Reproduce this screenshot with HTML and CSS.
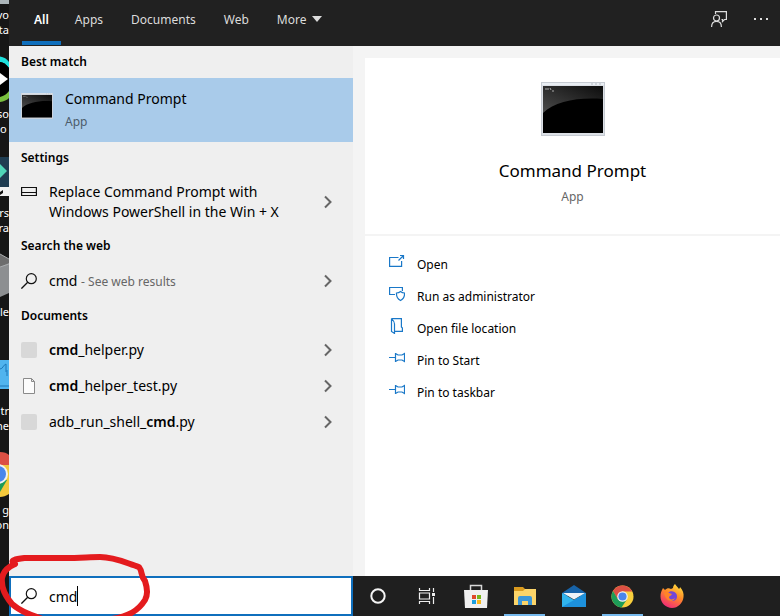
FILE: index.html
```
<!DOCTYPE html>
<html lang="en">
<head>
    <meta charset="UTF-8">
    <meta name="viewport" content="width=device-width, initial-scale=1.0">
    <title>Search</title>
    <link rel="stylesheet" href="styles.css">
</head>
<body>

    <!-- Shared symbols -->
    <svg class="symbols" aria-hidden="true">
        <symbol id="chevron" viewBox="0 0 10 14">
            <path d="M2 1.5L7.5 7L2 12.5" fill="none" stroke="#666" stroke-width="2"/>
        </symbol>
        <symbol id="search" viewBox="0 0 16 16">
            <circle cx="10.3" cy="5.7" r="5" fill="none" stroke="#111" stroke-width="1.2"/>
            <path d="M6.7 9.3L.4 15.6" stroke="#111" stroke-width="1.3"/>
        </symbol>
        <symbol id="pin" viewBox="0 0 16 16">
            <path d="M0 7.5H6M6.5 3V12M6.5 3.500L9 5H13L15.500 3.500V11.500L13 10H9L6.500 11.500" fill="none" stroke="#1a78c8" stroke-width="1.2"/>
        </symbol>
        <symbol id="console" viewBox="0 0 64 54" preserveAspectRatio="none">
            <rect x=".5" y=".5" width="63" height="53" fill="#dce0e6" stroke="#c6cbd2"/>
            <path d="M1 1H63V3H1Z" fill="#e9eef3"/>
            <rect x="2" y="4" width="60" height="47" fill="#000"/>
            <path d="M2 4H62V17C38 15 14 19 2 31Z" fill="url(#gloss)"/>
            <path d="M4 7H6M7 6V8M9 6L10 8M11 9H13" stroke="#aaa" stroke-width="1"/>
            <path d="M50 2H52M54 2H56M58 2H60" stroke="#b4b9c0" stroke-width="1"/>
        </symbol>
        <symbol id="chrome" viewBox="0 0 48 48">
            <circle cx="24" cy="24" r="23" fill="#f9cf3d"/>
            <path d="M4 12.5A23 23 0 0 1 44 12.5L44 13.5H24L14 29.5Z" fill="#dc5044"/>
            <path d="M4.1 12.5A23 23 0 0 0 22 46.9L33.5 29.5L24 34L14.5 29.5Z" fill="#1d9c58"/>
            <circle cx="24" cy="24" r="11" fill="#f2f2f2"/>
            <circle cx="24" cy="24" r="8.5" fill="#4a86ec"/>
        </symbol>
        <linearGradient id="gloss" x1="0" y1="1" x2="1" y2="0">
            <stop offset="0" stop-color="#4c4c4c"/>
            <stop offset="1" stop-color="#0c0c0c"/>
        </linearGradient>
    </svg>

    <div class="screen">
        <aside class="desktop">
            <div class="shortcut">
                <div class="shortcut-icon bin"></div>
                <span>vo</span>
                <span>ta</span>
            </div>
            <div class="shortcut">
                <svg class="shortcut-icon" viewBox="0 0 9 48">
                    <path d="M0 1.5C4 2 7 4 9 7V13C6 9 3 7 0 7Z" fill="#1fe0dc"/>
                    <path d="M0 7C3 7 6 9 9 13V37C6 41 3 43 0 43Z" fill="#000"/>
                    <path d="M0 18L8 24L0 30Z" fill="#fff"/>
                    <path d="M9 36V43C7 45 4 46.5 0 47V42C4 41 7 39 9 36Z" fill="#79bf3f"/>
                </svg>
                <span>so</span>
                <span class="start">o C</span>
            </div>
            <div class="shortcut">
                <svg class="shortcut-icon" viewBox="0 0 9 48">
                    <rect y="3" width="9" height="30" fill="#1f3d52"/>
                    <path d="M0 10L7 17L0 24Z" fill="#4fd6b8"/>
                    <rect y="33" width="9" height="9" fill="#f2f2f2"/>
                    <path d="M0 38L3 36V39L0 41Z" fill="#111"/>
                </svg>
                <span>ers</span>
                <span>ora</span>
            </div>
            <div class="shortcut">
                <svg class="shortcut-icon" viewBox="0 0 9 48">
                    <path d="M0 1L9 6V12L0 14Z" fill="#6d6d6d"/>
                    <path d="M0 14L9 10V40L0 44Z" fill="#8d8f91"/>
                    <path d="M0 1L9 6M0 14L9 11" stroke="#a9abad" fill="none"/>
                </svg>
                <span>le</span>
                <span>&nbsp;</span>
            </div>
            <div class="shortcut">
                <svg class="shortcut-icon" viewBox="0 0 9 48">
                    <rect y="8" width="9" height="29" fill="#50b4ee"/>
                    <path d="M0 34H9M0 17C3 17 3 13 6 12V20M7 18V24" stroke="#1c77b8" fill="none"/>
                </svg>
                <span>tr</span>
                <span>ne</span>
            </div>
            <div class="shortcut">
                <svg class="shortcut-icon" viewBox="0 0 9 48">
                    <path d="M0 1C4 1 7 2 9 4V14H0Z" fill="#dc5044"/>
                    <path d="M0 14H9V43C6 45 3 46 0 46Z" fill="#f4c93c"/>
                    <path d="M0 41L7 29H0Z" fill="#1d9c58"/>
                    <circle cx="-2" cy="23" r="10" fill="#f2f2f2"/>
                    <circle cx="-2" cy="23" r="8" fill="#4a86ec"/>
                </svg>
                <span>g</span>
                <span>on</span>
            </div>
        </aside>

        <div class="shell">
            <header class="tabs">
                <nav>
                    <button class="tab active">All</button>
                    <button class="tab">Apps</button>
                    <button class="tab">Documents</button>
                    <button class="tab">Web</button>
                    <button class="tab">More <svg width="10" height="6" viewBox="0 0 10 6"><path d="M0 0H10L5 6Z" fill="#dcdcdc"/></svg></button>
                </nav>
                <div class="tools">
                    <button aria-label="Feedback">
                        <svg width="16" height="16" viewBox="0 0 16 16" fill="none" stroke="#ddd" stroke-width="1.2">
                            <path d="M4.5 3V.6H15.4V8.5H13.5L11.5 10.5V8.5H10.5"/>
                            <circle cx="5.5" cy="7" r="3"/>
                            <path d="M.6 16C.6 12.5 2.5 10.3 5.5 10.3S10.4 12.5 10.4 16"/>
                        </svg>
                    </button>
                    <button aria-label="Options">
                        <svg width="16" height="16" viewBox="0 0 16 16" fill="#ddd"><path d="M1 7H3V9H1ZM7 7H9V9H7ZM13 7H15V9H13Z"/></svg>
                    </button>
                </div>
            </header>

            <main class="panes">
                <section class="results">
                    <h2>Best match</h2>
                    <button class="best">
                        <svg width="32" height="26"><use href="#console"/></svg>
                        <span>
                            <span class="name">Command Prompt</span>
                            <span class="kind">App</span>
                        </span>
                    </button>

                    <h2>Settings</h2>
                    <button class="result tall">
                        <svg class="icon" viewBox="0 0 16 16"><path d="M.6 3.5H15.4V11.5H.6ZM.6 8.5H15.4" fill="none" stroke="#111" stroke-width="1.2"/></svg>
                        <span class="label">Replace Command Prompt with Windows PowerShell in the Win + X</span>
                        <svg class="chevron"><use href="#chevron"/></svg>
                    </button>

                    <h2>Search the web</h2>
                    <button class="result web">
                        <svg class="icon"><use href="#search"/></svg>
                        <span class="label">cmd <small>- See web results</small></span>
                        <svg class="chevron"><use href="#chevron"/></svg>
                    </button>

                    <h2>Documents</h2>
                    <button class="result">
                        <span class="icon blank"></span>
                        <span class="label"><b>cmd</b>_helper.py</span>
                        <svg class="chevron"><use href="#chevron"/></svg>
                    </button>
                    <button class="result">
                        <svg class="icon" viewBox="0 0 16 16"><path d="M2.5 .5H10.5L13.5 3.5V15.5H2.5ZM10.5 .5V3.5H13.5" fill="#fcfcfc" stroke="#8a8a8a"/></svg>
                        <span class="label"><b>cmd</b>_helper_test.py</span>
                        <svg class="chevron"><use href="#chevron"/></svg>
                    </button>
                    <button class="result">
                        <span class="icon blank"></span>
                        <span class="label">adb_run_shell_<b>cmd</b>.py</span>
                        <svg class="chevron"><use href="#chevron"/></svg>
                    </button>
                </section>

                <section class="preview">
                    <div class="card">
                        <svg width="64" height="54"><use href="#console"/></svg>
                        <h1>Command Prompt</h1>
                        <p>App</p>
                    </div>
                    <div class="actions">
                        <button>
                            <svg class="icon" viewBox="0 0 16 16" fill="none" stroke="#1a78c8" stroke-width="1.2"><path d="M9.5 3.5H.6V12.4H12.6V7M9.5 6.5L14.5 1.5M11 1.5H14.5V5"/></svg>
                            Open
                        </button>
                        <button>
                            <svg class="icon" viewBox="0 0 16 16" fill="none" stroke="#1a78c8" stroke-width="1.2"><path d="M6 8.5H.6V1.5H13.4V5M11.5 5.5C13 6.8 14 7 15.5 7C15.8 11 14.5 13 11.5 14.5C8.5 13 7.2 11 7.5 7C9 7 10 6.8 11.5 5.5Z"/></svg>
                            Run as administrator
                        </button>
                        <button>
                            <svg class="icon" viewBox="0 0 16 16" fill="none" stroke="#1a78c8" stroke-width="1.2"><path d="M2.5 .6H12.4V9L13.4 10V13.4H6M2.5 .6V13.5L5.5 15.4V6C5.5 4 4 2 2.5 .6"/></svg>
                            Open file location
                        </button>
                        <button>
                            <svg class="icon"><use href="#pin"/></svg>
                            Pin to Start
                        </button>
                        <button>
                            <svg class="icon"><use href="#pin"/></svg>
                            Pin to taskbar
                        </button>
                    </div>
                </section>
            </main>

            <footer class="taskbar">
                <label class="search-box">
                    <svg class="icon"><use href="#search"/></svg>
                    <input type="text" value="cmd" aria-label="Search" autocomplete="off" spellcheck="false">
                    <span class="caret"></span>
                </label>
                <button class="task" aria-label="Cortana">
                    <svg width="16" height="16" viewBox="0 0 16 16"><circle cx="8" cy="8" r="6.7" fill="none" stroke="#f4f4f4" stroke-width="2"/></svg>
                </button>
                <button class="task" aria-label="Task View">
                    <svg width="18" height="16" viewBox="0 0 18 16" fill="none" stroke="#eee" stroke-width="1.2"><path d="M1.5 0V2.5H11.5V0M1.5 16V13.5H11.5V16M1.5 5H11.5V11H1.5ZM15.5 0V4M15.5 9V16"/><path d="M14 5H17V8H14Z" fill="#eee" stroke="none"/></svg>
                </button>
                <button class="task" aria-label="Microsoft Store">
                    <svg width="24" height="24" viewBox="0 0 24 24"><path d="M6.5 7V1.5H17.5V7" fill="none" stroke="#d8d8d8" stroke-width="1.5"/><path d="M0 6H24L23 24H1Z" fill="#f0f0f0"/><path d="M8 11H12V15H8Z" fill="#e0492a"/><path d="M13 11H17V15H13Z" fill="#79b51c"/><path d="M8 16H12V20H8Z" fill="#1c9fe0"/><path d="M13 16H17V20H13Z" fill="#f8b61c"/></svg>
                </button>
                <button class="task open" aria-label="File Explorer">
                    <svg width="22" height="20" viewBox="0 0 22 20"><path d="M0 1H9L11 3H21V8H0Z" fill="#d99a1e"/><path d="M0 5H9L11 3H22V19H0Z" fill="#fbd469"/><path d="M4 19V12Q4 10 6 10H16Q18 10 18 12V19H14V15H8V19Z" fill="#3b97d9"/></svg>
                </button>
                <button class="task" aria-label="Mail">
                    <svg width="24" height="22" viewBox="0 0 24 22"><path d="M0 8L12 0L24 8V11H0Z" fill="#1763a8"/><path d="M0 8L12 15L24 8V22H0Z" fill="#31b5ee"/><path d="M0 22L24 8V22Z" fill="#1d91dc"/><path d="M1 8H23L12 14.5Z" fill="#eef3f7"/></svg>
                </button>
                <button class="task open" aria-label="Chrome">
                    <svg width="23" height="23"><use href="#chrome"/></svg>
                </button>
                <button class="task" aria-label="Firefox">
                    <svg width="24" height="24" viewBox="0 0 24 24">
                        <defs><linearGradient id="fox" x1=".8" y1="0" x2=".3" y2="1"><stop offset="0" stop-color="#ffe23e"/><stop offset=".45" stop-color="#ff8a28"/><stop offset="1" stop-color="#f0277a"/></linearGradient></defs>
                        <path d="M3 4L5 6C7 4 9 4 11 5L13 4C13 2 14 1 15 0C16 2 18 3 19 5C20 4 20 3 20 3C23 6 24 10 23.5 13C23 19 18 24 12 24S.5 19 .5 12.5C.5 9 1.5 7 3 4Z" fill="url(#fox)"/>
                        <path d="M8 9C10 6 15 7 16.5 10C18 14 16 17 12.5 17C9 17 7 15 7 12L11 11Z" fill="#7446d8"/>
                        <path d="M4 9C6 7 8 8 9 9L12 10C11 12 9 12 9 13C9 16 13 16 15 14C13 19 6 18 4 9Z" fill="#ff8428"/>
                    </svg>
                </button>
            </footer>
        </div>

        <svg class="marker" width="152" height="66" viewBox="0 0 152 66" aria-hidden="true">
            <path d="M15 14C8 17 3 22 2 28C1 37 5 46 12 54C20 61 30 65 40 68M15 14C8 10 17 9 25 8H65C80 8 90 7 100 7C115 7 126 13 139 17C143 22 140 25 145 31C147 37 148 45 145 50C138 61 129 66 112 69" fill="none" stroke="#e41b1e" stroke-width="6" stroke-linecap="round" stroke-linejoin="round"/>
        </svg>
    </div>

</body>
</html>
```

FILE: styles.css
```
:root {
    --accent: #0f6fbd;
    --dark: #212121;
    --panel: #efefef;
    --selected: #a9cbea;
    --gutter: #f4f4f4;
    --muted: #666;
}

* {
    box-sizing: border-box;
    margin: 0;
    padding: 0;
}

body {
    font-family: "Noto Sans", "Open Sans", sans-serif;
    font-size: 12px;
    color: #000;
    background: #161616;
}

button {
    font: inherit;
    color: inherit;
    background: none;
    border: none;
    text-align: left;
}

svg {
    display: block;
    flex: none;
}

.symbols {
    position: absolute;
    width: 0;
    height: 0;
}

.screen {
    position: relative;
    display: grid;
    grid-template-columns: 9px 1fr;
    height: 100vh;
    overflow: hidden;
}

/* Desktop behind the search panel */
.desktop {
    overflow: hidden;
    color: #fff;
    font-size: 11px;
    line-height: 15px;
    white-space: nowrap;
}

.shortcut {
    display: flex;
    flex-direction: column;
    align-items: flex-end;
    padding-bottom: 18px;
}

.shortcut .start {
    align-self: flex-start;
}

.shortcut-icon {
    width: 9px;
    height: 48px;
    margin-bottom: 3px;
}

.shortcut-icon.bin {
    height: 4px;
    background: #aab4b8;
}

.shell {
    display: flex;
    flex-direction: column;
    min-width: 0;
}

/* Tabs */
.tabs {
    display: flex;
    justify-content: space-between;
    height: 46px;
    padding-left: 13px;
    background: var(--dark);
    color: #dcdcdc;
}

.tabs nav {
    display: flex;
}

.tab {
    display: flex;
    align-items: center;
    gap: 6px;
    padding: 0 14px 3px;
    margin-bottom: 1px;
    border-bottom: 4px solid transparent;
}

.tab.active {
    padding: 0 12px 3px;
    color: #fff;
    font-weight: 600;
    border-color: var(--accent);
}

.tools {
    display: flex;
    gap: 26px;
    padding: 0 11px 8px 0;
}

/* Results */
.panes {
    flex: 1;
    display: grid;
    grid-template-columns: 344px 1fr;
}

.results {
    background: var(--panel);
}

.results h2 {
    padding-left: 12px;
    font-size: 12px;
    font-weight: 600;
    line-height: 32px;
}

.best {
    display: flex;
    gap: 12px;
    width: 100%;
    height: 64px;
    padding: 10px 12px;
    background: var(--selected);
}

.best > svg {
    margin-top: 5px;
}

.name,
.kind {
    display: block;
}

.name {
    font-size: 14px;
    line-height: 22px;
}

.kind {
    color: #4c5c6b;
    line-height: 24px;
}

.result {
    display: flex;
    align-items: center;
    gap: 12px;
    width: 100%;
    height: 36px;
    padding: 0 20px 0 12px;
    font-size: 14px;
    line-height: 20px;
}

.result.web {
    height: 38px;
}

.result.tall {
    height: 56px;
}

.result.tall .icon {
    align-self: flex-start;
    margin-top: 10px;
}

.result b {
    font-weight: 600;
}

.result small {
    font-size: 12px;
    color: var(--muted);
}

.label {
    flex: 1;
}

.icon {
    flex: none;
    width: 16px;
    height: 16px;
}

.blank {
    background: #d8d8d8;
    border-radius: 2px;
}

.chevron {
    width: 10px;
    height: 14px;
}

/* Preview */
.preview {
    display: flex;
    flex-direction: column;
    gap: 2px;
    padding: 12px 0 0 12px;
    background: var(--gutter);
}

.card {
    display: flex;
    flex-direction: column;
    align-items: center;
    height: 176px;
    padding-top: 24px;
    background: #fff;
}

.card h1 {
    margin-top: 22px;
    font-size: 17px;
    font-weight: 400;
    line-height: 26px;
}

.card p {
    color: var(--muted);
    line-height: 26px;
}

.actions {
    flex: 1;
    padding: 12px 24px;
    background: #fff;
}

.actions button {
    display: flex;
    align-items: center;
    gap: 12px;
    height: 32px;
}

.actions .icon {
    margin-bottom: 4px;
}

/* Taskbar */
.taskbar {
    display: flex;
    height: 40px;
    background: #1f1f1f;
}

.search-box {
    display: flex;
    align-items: center;
    width: 344px;
    padding-left: 10px;
    background: #fff;
    border: 2px solid var(--accent);
}

.search-box input {
    field-sizing: content;
    margin-left: 12px;
    font: inherit;
    font-size: 14px;
    border: none;
    outline: none;
}

.caret {
    width: 1px;
    height: 20px;
    background: #000;
}

.task {
    display: flex;
    align-items: center;
    justify-content: center;
    width: 49px;
    position: relative;
}

.task.open::after {
    content: "";
    position: absolute;
    bottom: 0;
    left: 4px;
    right: 4px;
    height: 2px;
    background: #76b9ed;
}

/* Hand drawn circle over the search box */
.marker {
    position: absolute;
    left: 0;
    bottom: 0;
    pointer-events: none;
}
```
